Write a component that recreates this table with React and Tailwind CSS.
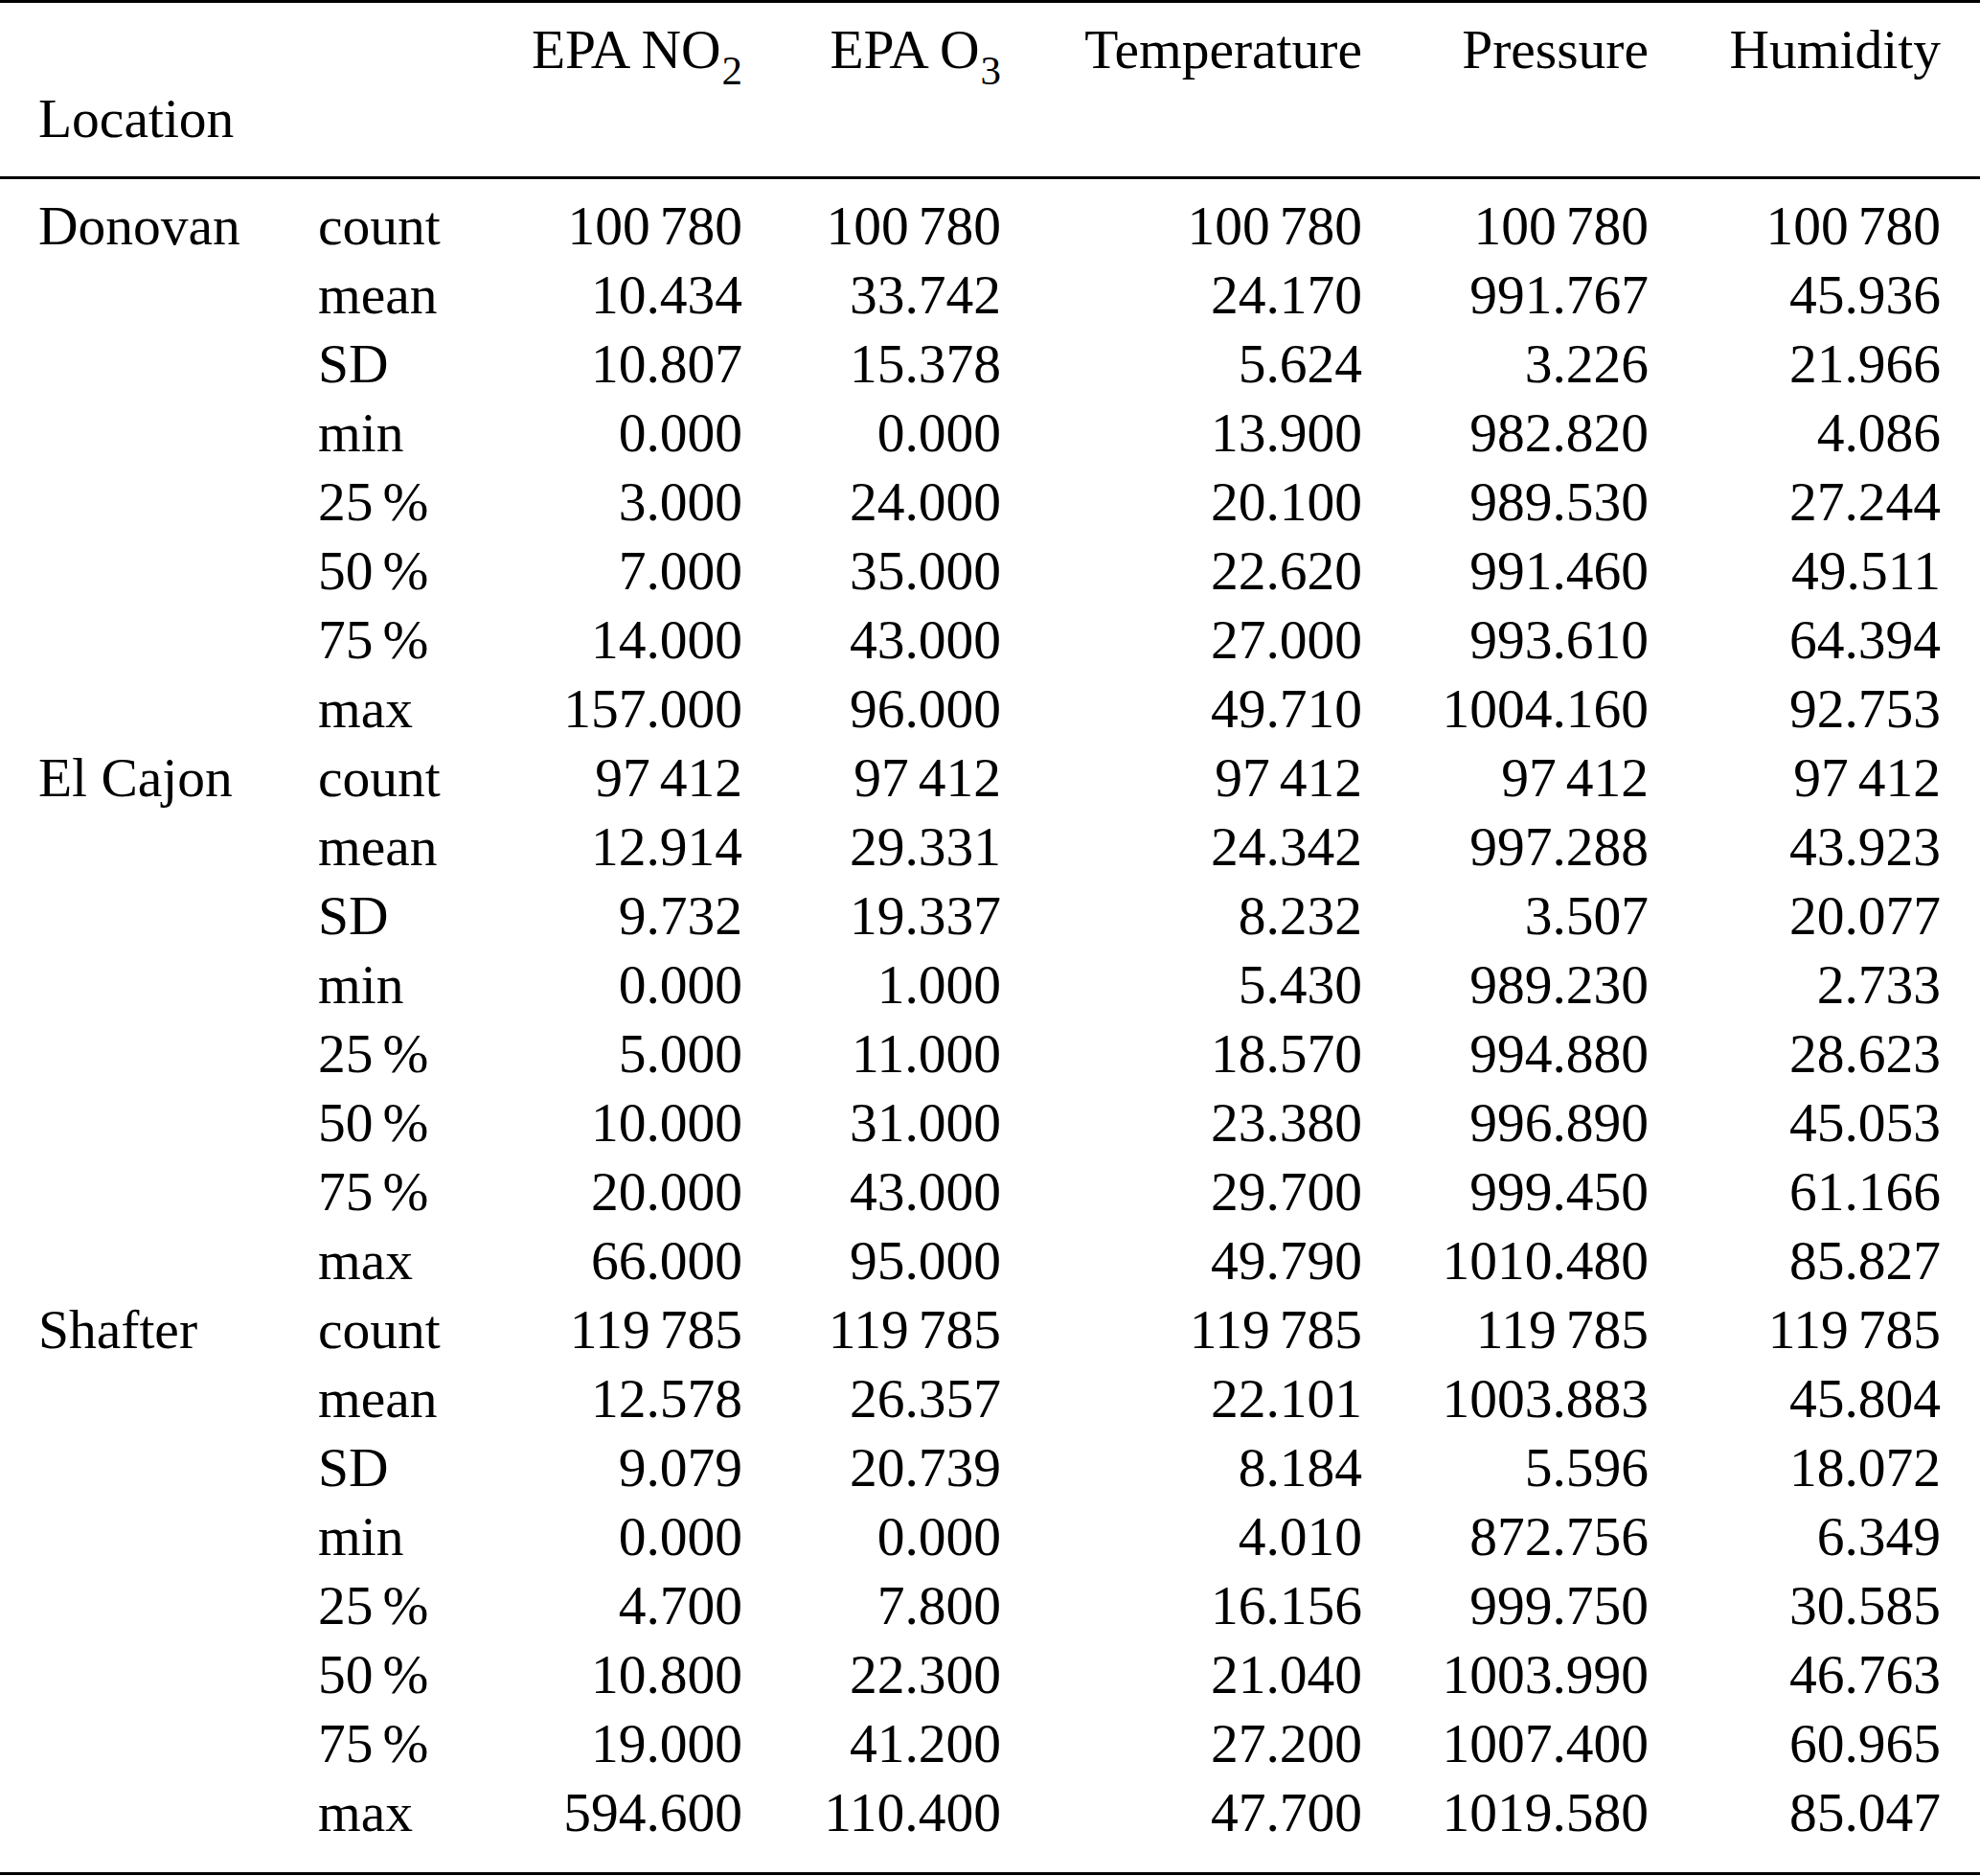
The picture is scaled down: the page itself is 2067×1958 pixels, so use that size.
import React from "react";

const data = [
  {
    loc: "Donovan",
    rows: [
      ["count", "100 780", "100 780", "100 780", "100 780", "100 780"],
      ["mean", "10.434", "33.742", "24.170", "991.767", "45.936"],
      ["SD", "10.807", "15.378", "5.624", "3.226", "21.966"],
      ["min", "0.000", "0.000", "13.900", "982.820", "4.086"],
      ["25 %", "3.000", "24.000", "20.100", "989.530", "27.244"],
      ["50 %", "7.000", "35.000", "22.620", "991.460", "49.511"],
      ["75 %", "14.000", "43.000", "27.000", "993.610", "64.394"],
      ["max", "157.000", "96.000", "49.710", "1004.160", "92.753"],
    ],
  },
  {
    loc: "El Cajon",
    rows: [
      ["count", "97 412", "97 412", "97 412", "97 412", "97 412"],
      ["mean", "12.914", "29.331", "24.342", "997.288", "43.923"],
      ["SD", "9.732", "19.337", "8.232", "3.507", "20.077"],
      ["min", "0.000", "1.000", "5.430", "989.230", "2.733"],
      ["25 %", "5.000", "11.000", "18.570", "994.880", "28.623"],
      ["50 %", "10.000", "31.000", "23.380", "996.890", "45.053"],
      ["75 %", "20.000", "43.000", "29.700", "999.450", "61.166"],
      ["max", "66.000", "95.000", "49.790", "1010.480", "85.827"],
    ],
  },
  {
    loc: "Shafter",
    rows: [
      ["count", "119 785", "119 785", "119 785", "119 785", "119 785"],
      ["mean", "12.578", "26.357", "22.101", "1003.883", "45.804"],
      ["SD", "9.079", "20.739", "8.184", "5.596", "18.072"],
      ["min", "0.000", "0.000", "4.010", "872.756", "6.349"],
      ["25 %", "4.700", "7.800", "16.156", "999.750", "30.585"],
      ["50 %", "10.800", "22.300", "21.040", "1003.990", "46.763"],
      ["75 %", "19.000", "41.200", "27.200", "1007.400", "60.965"],
      ["max", "594.600", "110.400", "47.700", "1019.580", "85.047"],
    ],
  },
];

function Thin({ text }) {
  const parts = text.split(" ");
  if (parts.length === 1) return <>{text}</>;
  return (
    <>
      {parts[0]}
      <span className="inline-block w-[10px]"></span>
      {parts[1]}
    </>
  );
}

const grid =
  "grid grid-cols-[332px_200px_243px_270px_377px_299px_305px_41px]";

export default function App() {
  return (
    <div className="w-[2067px] h-[1958px] bg-white text-black font-['Liberation_Serif','Times_New_Roman',serif] text-[57.5px] leading-[72px]">
      <div className="h-[3px] bg-black" />
      <div className={`${grid} grid-rows-[72px_72px] pt-[13px] pb-[24px]`}>
        <div />
        <div />
        <div className="text-right whitespace-nowrap h-[72px]">
          EPA NO
          <span className="text-[43px] leading-none relative top-[17px] ml-[1px]">2</span>
        </div>
        <div className="text-right whitespace-nowrap h-[72px]">
          EPA O
          <span className="text-[43px] leading-none relative top-[17px] ml-[1px]">3</span>
        </div>
        <div className="text-right">Temperature</div>
        <div className="text-right">Pressure</div>
        <div className="text-right">Humidity</div>
        <div />
        <div className="pl-[40px]">Location</div>
        <div />
        <div />
        <div />
        <div />
        <div />
        <div />
        <div />
      </div>
      <div className="h-[3px] bg-black" />
      <div className="pt-[13px] pb-[26px]">
        {data.map((g) =>
          g.rows.map((r, i) => (
            <div key={g.loc + i} className={`${grid} whitespace-nowrap`}>
              <div className="pl-[40px]">{i === 0 ? g.loc : ""}</div>
              <div>
                <Thin text={r[0]} />
              </div>
              {r.slice(1).map((v, j) => (
                <div key={j} className="text-right">
                  <Thin text={v} />
                </div>
              ))}
              <div />
            </div>
          ))
        )}
      </div>
      <div className="h-[3px] bg-black" />
    </div>
  );
}
